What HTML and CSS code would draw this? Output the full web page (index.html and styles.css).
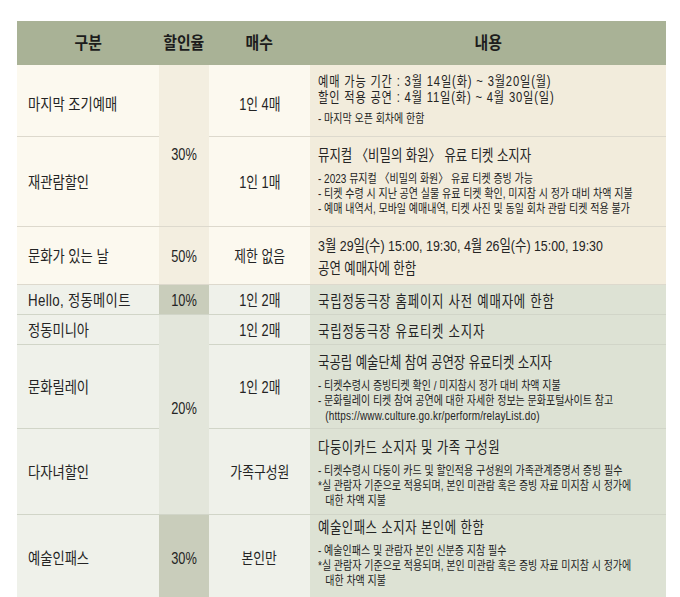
FILE: index.html
```html
<!DOCTYPE html>
<html lang="ko">
<head>
<meta charset="utf-8">
<title>할인 안내</title>
<link rel="stylesheet" href="styles.css">
</head>
<body>
<div class="tbl">
  <div class="hd"><span class="ht">구분</span></div>
  <div class="hd"><span class="ht">할인율</span></div>
  <div class="hd"><span class="ht">매수</span></div>
  <div class="hd"><span class="ht">내용</span></div>

  <div class="c lab y1 r1"><span class="t">마지막 조기예매</span></div>
  <div class="c mid y2 span2 p30"><span class="t">30%</span></div>
  <div class="c mid y1 r1"><span class="t">1인 4매</span></div>
  <div class="c txt y4">
    <div class="w">
      <div class="m tight">예매 가능 기간 : 3월 14일(화) ~ 3월20일(월)</div>
      <div class="m tight">할인 적용 공연 : 4월 11일(화) ~ 4월 30일(일)</div>
      <div class="s">- 마지막 오픈 회차에 한함</div>
    </div>
  </div>

  <div class="c lab y1"><span class="t">재관람할인</span></div>
  <div class="c mid y1"><span class="t">1인 1매</span></div>
  <div class="c txt y4">
    <div class="w">
      <div class="m">뮤지컬 〈비밀의 화원〉 유료 티켓 소지자</div>
      <div class="s">- 2023 뮤지컬 〈비밀의 화원〉 유료 티켓 증빙 가능</div>
      <div class="s2">- 티켓 수령 시 지난 공연 실물 유료 티켓 확인, 미지참 시 정가 대비 차액 지불</div>
      <div class="s2">- 예매 내역서, 모바일 예매내역, 티켓 사진 및 동일 회차 관람 티켓 적용 불가</div>
    </div>
  </div>

  <div class="c lab y1"><span class="t">문화가 있는 날</span></div>
  <div class="c mid y2"><span class="t">50%</span></div>
  <div class="c mid y1"><span class="t">제한 없음</span></div>
  <div class="c txt y4 down">
    <div class="w">
      <div class="m loose">3월 29일(수) 15:00, 19:30, 4월 26일(수) 15:00, 19:30</div>
      <div class="m loose">공연 예매자에 한함</div>
    </div>
  </div>

  <div class="c lab g1"><span class="t latin">Hello, 정동메이트</span></div>
  <div class="c mid g3"><span class="t">10%</span></div>
  <div class="c mid g1"><span class="t">1인 2매</span></div>
  <div class="c txt g4 down"><div class="w"><div class="m wide">국립정동극장 홈페이지 사전 예매자에 한함</div></div></div>

  <div class="c lab g1"><span class="t">정동미니아</span></div>
  <div class="c mid g2 span3 p20"><span class="t">20%</span></div>
  <div class="c mid g1"><span class="t">1인 2매</span></div>
  <div class="c txt g4 down"><div class="w"><div class="m wide">국립정동극장 유료티켓 소지자</div></div></div>

  <div class="c lab g1"><span class="t">문화릴레이</span></div>
  <div class="c mid g1"><span class="t">1인 2매</span></div>
  <div class="c txt g4 down2">
    <div class="w">
      <div class="m">국공립 예술단체 참여 공연장 유료티켓 소지자</div>
      <div class="s">- 티켓수령시 증빙티켓 확인 / 미지참시 정가 대비 차액 지불</div>
      <div class="s2">- 문화릴레이 티켓 참여 공연에 대한 자세한 정보는 문화포털사이트 참고</div>
      <div class="s2 ind url">(https://www.culture.go.kr/perform/relayList.do)</div>
    </div>
  </div>

  <div class="c lab g1"><span class="t">다자녀할인</span></div>
  <div class="c mid g1"><span class="t">가족구성원</span></div>
  <div class="c txt g4 down2">
    <div class="w">
      <div class="m wide2">다둥이카드 소지자 및 가족 구성원</div>
      <div class="s">- 티켓수령시 다둥이 카드 및 할인적용 구성원의 가족관계증명서 증빙 필수</div>
      <div class="s2">*실 관람자 기준으로 적용되며, 본인 미관람 혹은 증빙 자료 미지참 시 정가에</div>
      <div class="s2 ind">대한 차액 지불</div>
    </div>
  </div>

  <div class="c lab g1 last"><span class="t">예술인패스</span></div>
  <div class="c mid g3 last"><span class="t">30%</span></div>
  <div class="c mid g1 last"><span class="t">본인만</span></div>
  <div class="c txt g4 last up">
    <div class="w">
      <div class="m wide2">예술인패스 소지자 본인에 한함</div>
      <div class="s">- 예술인패스 및 관람자 본인 신분증 지참 필수</div>
      <div class="s2">*실 관람자 기준으로 적용되며, 본인 미관람 혹은 증빙 자료 미지참 시 정가에</div>
      <div class="s2 ind">대한 차액 지불</div>
    </div>
  </div>
</div>
</body>
</html>
```

FILE: styles.css
```css
html, body {
  margin: 0;
  padding: 0;
  background: #ffffff;
}

body {
  font-family: "Liberation Sans", "Noto Sans CJK KR", sans-serif;
  color: #242424;
  overflow: hidden;
}

.tbl {
  display: grid;
  grid-template-columns: 142px 50px 101px 356px;
  grid-template-rows: 44px 72px 90px 58px 30px 30px 84px 86px 84px;
  margin: 21px 0 0 17px;
  width: 649px;
}

.hd {
  background: #a9b296;
  display: flex;
  align-items: center;
  justify-content: center;
  font-size: 16.5px;
  font-weight: 700;
  color: #1c1c1c;
}

.ht {
  display: inline-block;
  transform: scaleX(0.9);
  transform-origin: 50% 50%;
  line-height: 20px;
}

.c {
  display: flex;
  align-items: center;
  box-sizing: border-box;
  min-width: 0;
  border-bottom: 1px solid #ddd9cd;
}

.c.g1, .c.g2, .c.g3, .c.g4 {
  border-bottom-color: #d1d5c8;
}

.c.last {
  border-bottom: none;
}

.span2 { grid-row: span 2; }
.span3 { grid-row: span 3; }

.lab {
  padding: 3px 0 0 11px;
  font-size: 16px;
}

.mid {
  justify-content: center;
  padding-top: 3px;
  font-size: 16px;
}

.r1 { padding-top: 9px; }
.p30 { padding-top: 18px; }
.p20 { padding-bottom: 14px; }

.t {
  display: inline-block;
  white-space: nowrap;
  transform: scaleX(0.8);
  line-height: 20px;
}

.lab .t {
  transform: scaleX(0.83);
  transform-origin: 0 50%;
}

.lab .t.latin { letter-spacing: 0.4px; }

.mid .t { transform-origin: 50% 50%; }

.txt {
  padding-left: 8px;
  overflow: visible;
}

.down { padding-top: 4px; }
.down2 { padding-top: 5px; }
.up { padding-bottom: 6px; }

.w {
  transform: scaleX(0.8);
  transform-origin: 0 50%;
  white-space: nowrap;
}

.m {
  font-size: 15.5px;
  line-height: 18px;
}

.m.tight {
  font-size: 14px;
  line-height: 15.7px;
  letter-spacing: 1.05px;
}

.m.loose { line-height: 22.5px; }
.m.wide { letter-spacing: 1px; }
.m.wide2 { letter-spacing: 0.6px; }

.s, .s2 {
  font-size: 12.5px;
  line-height: 15px;
}

.s { margin-top: 7px; }

.ind { padding-left: 9px; }
.url { letter-spacing: 0.2px; }

.y1 { background: #fcf9ef; }
.y2 { background: #f3eee0; }
.y4 { background: #f2ecdc; }
.g1 { background: #eff1ea; }
.g2 { background: #e3e6db; }
.g3 { background: #c9cdbb; }
.g4 { background: #dde2d4; }
```
